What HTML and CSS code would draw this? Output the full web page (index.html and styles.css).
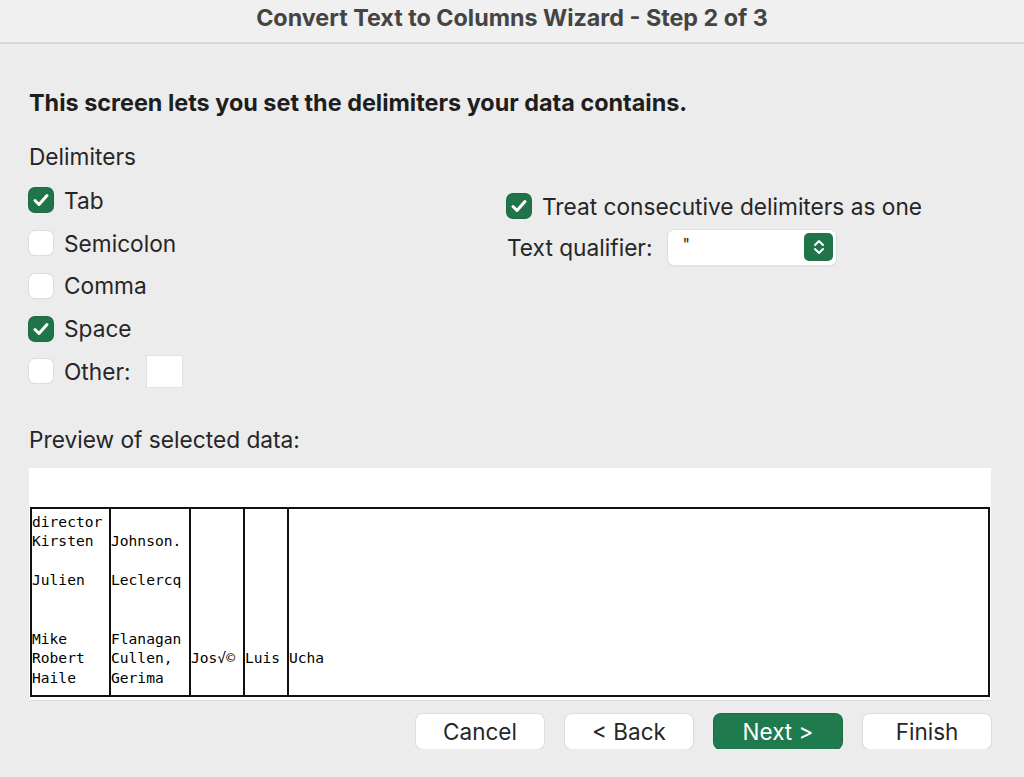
FILE: index.html
```html
<!DOCTYPE html>
<html lang="en">
<head>
    <meta charset="UTF-8">
    <title>Convert Text to Columns Wizard - Step 2 of 3</title>
    <link rel="stylesheet" href="styles.css">
</head>
<body>
<div class="titlebar">Convert Text to Columns Wizard - Step 2 of 3</div>

<div class="wizard">
    <h1 class="intro">This screen lets you set the delimiters your data contains.</h1>

    <div class="options">
        <div class="delimiters">
            <div class="group-label">Delimiters</div>
            <label class="check-row"><span class="box checked"></span>Tab</label>
            <label class="check-row"><span class="box"></span>Semicolon</label>
            <label class="check-row"><span class="box"></span>Comma</label>
            <label class="check-row"><span class="box checked"></span>Space</label>
            <label class="check-row"><span class="box"></span>Other:<span class="other-input"></span></label>
        </div>

        <div class="extras">
            <label class="check-row"><span class="box checked"></span>Treat consecutive delimiters as one</label>
            <div class="qualifier-row">
                <span>Text qualifier:</span>
                <div class="select">
                    <span class="select-value">"</span>
                    <span class="stepper">
                        <svg width="14" height="20" viewBox="0 0 14 20">
                            <path d="M3 8 L7 4 L11 8 M3 12 L7 16 L11 12" fill="none" stroke="#fff" stroke-width="2" stroke-linecap="round" stroke-linejoin="round"/>
                        </svg>
                    </span>
                </div>
            </div>
        </div>
    </div>

    <div class="group-label preview-label">Preview of selected data:</div>

    <div class="preview">
        <div class="preview-table">
            <div class="col c1">director
Kirsten

Julien


Mike
Robert
Haile</div>
            <div class="col c2">
Johnson.

Leclercq


Flanagan
Cullen,
Gerima</div>
            <div class="col c3">






Jos√©</div>
            <div class="col c4">






Luis</div>
            <div class="col c5">






Ucha</div>
        </div>
    </div>

    <div class="buttons">
        <button class="btn">Cancel</button>
        <button class="btn">&lt; Back</button>
        <button class="btn primary">Next &gt;</button>
        <button class="btn">Finish</button>
    </div>
</div>
</body>
</html>
```

FILE: styles.css
```css
body {
    margin: 0;
    background-color: #ececec;
    font-family: Inter, "Noto Sans", sans-serif;
    color: #222;
}

.titlebar {
    height: 42px;
    line-height: 35px;
    text-align: center;
    font-size: 23.3px;
    font-weight: 700;
    color: #444;
    background-color: #f0f0f0;
    border-bottom: 2px solid #d8d8d8;
}

.wizard {
    padding: 46px 33px 0 29px;
}

.intro {
    margin: 0;
    font-size: 23.4px;
    line-height: 26px;
    font-weight: 700;
    color: #1e1e1e;
}

.group-label {
    font-size: 22.7px;
    line-height: 26px;
    color: #262626;
}

.options {
    display: flex;
    margin-top: 28px;
}

.delimiters {
    width: 478px;
}

.delimiters .group-label {
    margin-bottom: 9px;
}

.check-row {
    display: flex;
    align-items: center;
    height: 42.75px;
    font-size: 22.7px;
    color: #262626;
}

.box {
    flex: none;
    width: 24px;
    height: 24px;
    margin-right: 11px;
    border-radius: 6px;
    background-color: #fff;
    box-shadow: 0 0 0 1px #dcdcdc, 0 1px 1px rgba(0, 0, 0, 0.08);
    box-sizing: border-box;
}

.box.checked {
    background-color: #1f7549;
    box-shadow: 0 0 0 1px #1a6a41;
    background-image: url("data:image/svg+xml,%3Csvg xmlns='http://www.w3.org/2000/svg' viewBox='0 0 24 24'%3E%3Cpath d='M6 12.5 L10 16.5 L18 7.5' fill='none' stroke='white' stroke-width='3' stroke-linecap='round' stroke-linejoin='round'/%3E%3C/svg%3E");
}

.other-input {
    width: 35px;
    height: 31px;
    margin-left: 16px;
    background-color: #fff;
    box-shadow: 0 0 0 1px #e2e2e2;
}

.extras {
    padding-top: 41px;
}

.qualifier-row {
    display: flex;
    align-items: center;
    margin-top: 2px;
    font-size: 22.7px;
    color: #262626;
}

.select {
    display: flex;
    align-items: center;
    justify-content: space-between;
    width: 168px;
    height: 35px;
    margin-left: 16px;
    padding: 0 3px 0 14px;
    box-sizing: border-box;
    background-color: #fff;
    border-radius: 6px;
    box-shadow: 0 0 0 1px #e0e0e0, 0 1px 2px rgba(0, 0, 0, 0.12);
}

.select-value {
    font-size: 16px;
    margin-top: -6px;
}

.stepper {
    display: flex;
    align-items: center;
    justify-content: center;
    width: 29px;
    height: 28px;
    border-radius: 5px;
    background-color: #1f7549;
}

.preview-label {
    margin-top: 34px;
}

.preview {
    margin-top: 15px;
    padding-top: 39px;
    padding-bottom: 3px;
    background-color: #fff;
    box-shadow: 0 1px 0 #dedede;
}

.preview-table {
    display: flex;
    height: 190px;
    margin: 0 1px;
    border: 2px solid #111;
    box-sizing: border-box;
    font-family: "DejaVu Sans Mono", "Liberation Mono", monospace;
    font-size: 14.6px;
    line-height: 19.5px;
    color: #000;
}

.col {
    white-space: pre;
    padding: 3px 0 0 0;
    border-right: 2px solid #111;
    overflow: hidden;
}

.c1 { width: 77px; }
.c2 { width: 78px; }
.c3 { width: 52px; }
.c4 { width: 42px; }
.c5 { flex: 1; border-right: none; }

.buttons {
    display: flex;
    justify-content: flex-end;
    gap: 21px;
    margin-top: 14px;
}

.btn {
    width: 128px;
    height: 35px;
    border: none;
    border-radius: 7px;
    background-color: #fff;
    box-shadow: 0 0 0 1px #dedede, 0 1px 2px rgba(0, 0, 0, 0.15);
    font-family: Inter, "Noto Sans", sans-serif;
    font-size: 22.5px;
    color: #262626;
}

.btn.primary {
    background-color: #1f7a4d;
    box-shadow: 0 0 0 1px #1a6b43;
    color: #fff;
}
```
